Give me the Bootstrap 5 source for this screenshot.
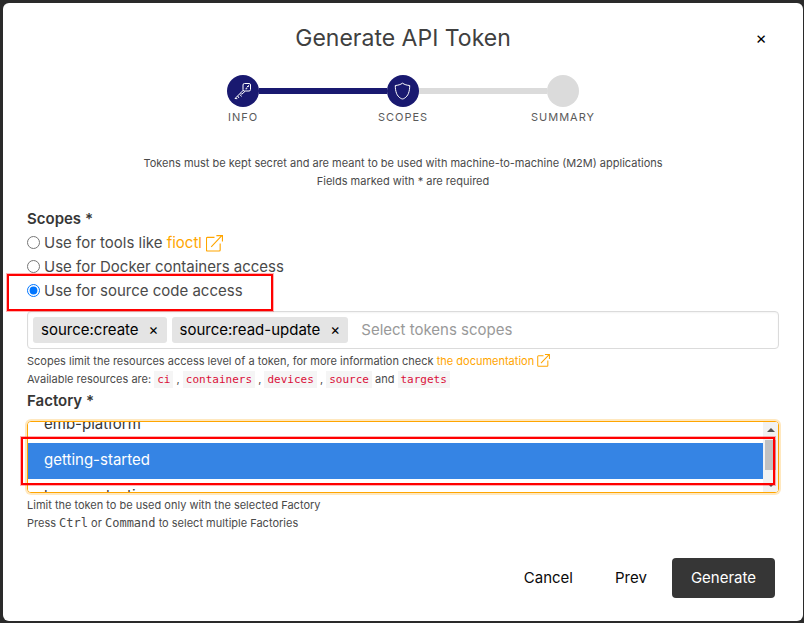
<!DOCTYPE html>
<html lang="en">
<head>
<meta charset="utf-8">
<meta name="viewport" content="width=device-width, initial-scale=1">
<title>Generate API Token</title>
<link href="https://cdn.jsdelivr.net/npm/bootstrap@5.3.0/dist/css/bootstrap.min.css" rel="stylesheet">
<style>
body { background: #2a2a2a; color: #4a4a4a; font-family: Inter, "Open Sans", sans-serif; font-size: 15px; line-height: 24px; }
.token-dialog { margin: 3px 1px 1px 3px; padding: 17px 24px 23px; border-radius: 6px; background: #fff; }
.dialog-title { font-size: 23px; line-height: 36px; color: #404040; font-weight: 400; }
.close-btn { right: 6px; top: 0; width: 24px; line-height: 36px; font-size: 17px; color: #000; }
.steps { width: 352px; max-width: 100%; margin: 19px auto 27px; }
.step { width: 32px; font-size: 11px; line-height: 20px; letter-spacing: 1px; color: #5a5a5a; }
.step-dot { width: 32px; height: 32px; background: #dbdbdb; }
.step-done .step-dot, .step-line-done { background: #191970; }
.step-line { height: 6px; margin-top: 13px; background: #dbdbdb; }
.step-line-done { background: #191970; }
.fine { font-size: 11px; line-height: 18px; color: #4a4a4a; }
.field-help { padding-top: 3px; }
.field-title { font-size: 15px; line-height: 24px; font-weight: 600; color: #363636; }
.accent, .accent:hover { color: #ffa500; text-decoration: none; }
.link-mark-sm { vertical-align: -2px; }
.token-form { margin-top: 17px; }
.scope-option { gap: 4px; }
.scope-option input { width: 13px; height: 13px; margin: 0 0 2px; }
.scope-box { min-height: 38px; padding: 5px; gap: 5px; border: 1px solid #dbdbdb; border-radius: 4px; box-shadow: inset 0 1px 2px rgba(10,10,10,.05); }
.scope-tag { height: 26px; padding: 0 8px; gap: 10px; background: #e4e4e4; color: #000; border-radius: 3px; }
.tag-remove { font-size: 15px; line-height: 24px; color: #000; }
.scope-input { min-width: 0; outline: 0; margin-left: 8px; color: #363636; }
.scope-input::placeholder { color: #999; opacity: 1; }
.resource { font-family: "DejaVu Sans Mono", monospace; font-size: 11px; color: #da1039; background: #f5f5f5; padding: 2px 3px; }
kbd.plain-key { font-family: "DejaVu Sans Mono", monospace; font-size: 12px; color: #4a4a4a; background: none; padding: 0; }
.factory-select { height: 72px; border: 1px solid #ffa500; border-radius: 4px; box-shadow: 0 0 0 2px rgba(255,165,0,.25); outline: 0; color: #363636; background: #fff; overflow-y: scroll; padding: 0; display: block; scrollbar-width: none; }
.factory-select option { height: 36px; padding: 7px 16px 5px; line-height: 24px; }
.factory-select option:checked { background: linear-gradient(#3584e4, #3584e4); color: #fff; -webkit-text-fill-color: #fff; }
.scroll-rail { right: 1px; top: 1px; bottom: 1px; width: 15px; padding: 6px 0 5px; background: #f1f1f1; border-radius: 0 3px 3px 0; pointer-events: none; }
.scroll-thumb { width: 11px; height: 30px; background: #c1c1c1; }
.highlight { border: 2px solid #f00; box-shadow: 0 0 0 1px rgba(255,0,0,.3); pointer-events: none; z-index: 2; }
.highlight-scope { left: -20px; top: -5px; width: 266px; height: 37px; }
.highlight-factory { left: -6px; right: 4px; top: 16px; height: 48px; }
.actions { margin-top: 26px; }
.action-btn, .action-btn:hover { font-size: 15px; line-height: 24px; padding: 7px 16px; border: 1px solid transparent; border-radius: 4px; color: #0a0a0a; }
.action-main, .action-main:hover { background: #363636; color: #fff; padding: 7px 18px; }
</style>
</head>
<body>
<main class="token-dialog">
  <header class="position-relative text-center">
    <h1 class="dialog-title mb-0">Generate API Token</h1>
    <button type="button" class="close-btn position-absolute border-0 bg-transparent p-0" aria-label="Close">×</button>
  </header>

  <div class="steps d-flex">
    <div class="step step-done d-flex flex-column align-items-center flex-shrink-0">
      <div class="step-dot rounded-circle d-flex align-items-center justify-content-center">
        <svg width="18" height="18" viewBox="0 0 18 18" fill="none" stroke="#fff" stroke-width="1" aria-hidden="true"><rect x="9" y="1.500" width="7.500" height="7.500" rx="1.500"/><path d="M9.500 8 1 16.500M11 9.300 7.800 12.200M7.800 12.200l-1.300-1M6 12.500l1.500 2M3.700 14l1.300 2M1 16.500l2.300.2M11.500 6.800h1.300V5.500M13 4.500h1.500V3.200"/></svg>
      </div>
      <span>INFO</span>
    </div>
    <div class="step-line step-line-done flex-grow-1"></div>
    <div class="step step-done d-flex flex-column align-items-center flex-shrink-0">
      <div class="step-dot rounded-circle d-flex align-items-center justify-content-center">
        <svg width="18" height="18" viewBox="0 0 18 18" fill="none" stroke="#fff" stroke-width="1" stroke-linejoin="round" aria-hidden="true"><path d="M8.500 1.200C6.500 2.600 4 3.300 1.300 3.500c0 6 1.500 10.500 5.200 12.700 1.500 1 2.500 1 4 0 3.700-2.200 5.200-6.700 5.200-12.700C13 3.300 10.500 2.600 8.500 1.200z"/></svg>
      </div>
      <span>SCOPES</span>
    </div>
    <div class="step-line flex-grow-1"></div>
    <div class="step d-flex flex-column align-items-center flex-shrink-0">
      <div class="step-dot rounded-circle"></div>
      <span>SUMMARY</span>
    </div>
  </div>

  <p class="fine text-center mb-0">Tokens must be kept secret and are meant to be used with machine-to-machine (M2M) applications<br>Fields marked with * are required</p>

  <form class="token-form">
    <fieldset>
      <legend class="field-title mb-0">Scopes *</legend>
      <div class="scope-option d-flex align-items-center">
        <input type="radio" name="use" id="use-tools">
        <label for="use-tools">Use for tools like <a class="accent d-inline-flex align-items-center" href="#">fioctl<svg class="ms-1" width="17" height="17" viewBox="0 0 18 18" fill="none" stroke="currentColor" stroke-width="1.200" aria-hidden="true"><path d="M9 2.500H1.500a1 1 0 0 0-1 1V16a1 1 0 0 0 1 1H14a1 1 0 0 0 1-1V9M5.500 12.500 16.500 1M11 .6h6.400V7"/></svg></a></label>
      </div>
      <div class="scope-option d-flex align-items-center">
        <input type="radio" name="use" id="use-docker">
        <label for="use-docker">Use for Docker containers access</label>
      </div>
      <div class="scope-option d-flex align-items-center position-relative">
        <input type="radio" name="use" id="use-source" checked>
        <label for="use-source">Use for source code access</label>
        <span class="highlight highlight-scope position-absolute"></span>
      </div>
    </fieldset>

    <div class="scope-box d-flex align-items-center mt-2">
      <span class="scope-tag d-flex align-items-center">source:create <button type="button" class="tag-remove border-0 bg-transparent p-0" aria-label="Remove source:create">×</button></span>
      <span class="scope-tag d-flex align-items-center">source:read-update <button type="button" class="tag-remove border-0 bg-transparent p-0" aria-label="Remove source:read-update">×</button></span>
      <input type="text" class="scope-input flex-grow-1 border-0 bg-transparent p-0" placeholder="Select tokens scopes" aria-label="Select tokens scopes">
    </div>
    <div class="fine field-help">Scopes limit the resources access level of a token, for more information check <a class="accent" href="#">the documentation <svg class="link-mark-sm" width="13" height="13" viewBox="0 0 18 18" fill="none" stroke="currentColor" stroke-width="1.400" aria-hidden="true"><path d="M9 2.500H2a1 1 0 0 0-1 1V16a1 1 0 0 0 1 1H14a1 1 0 0 0 1-1V9M5.500 12.500 16.500 1.200M11 .8h6.200V7"/></svg></a></div>
    <div class="fine">Available resources are: <code class="resource">ci</code> , <code class="resource">containers</code> , <code class="resource">devices</code> , <code class="resource">source</code> and <code class="resource">targets</code></div>

    <label class="field-title d-block mb-2" for="factory">Factory *</label>
    <div class="position-relative">
      <select class="factory-select w-100" id="factory" multiple>
        <option>emb-platform</option>
        <option selected>getting-started</option>
        <option>lmp-production</option>
      </select>
      <span class="scroll-rail position-absolute d-flex flex-column align-items-center justify-content-between" aria-hidden="true">
        <svg width="8" height="4" viewBox="0 0 8 4"><path d="M0 4 4 0l4 4z" fill="#505050"/></svg>
        <span class="scroll-thumb mb-auto mt-2"></span>
        <svg width="8" height="4" viewBox="0 0 8 4"><path d="M0 0l4 4 4-4z" fill="#505050"/></svg>
      </span>
      <span class="highlight highlight-factory position-absolute"></span>
    </div>
    <div class="fine field-help">Limit the token to be used only with the selected Factory</div>
    <div class="fine">Press <kbd class="plain-key">Ctrl</kbd> or <kbd class="plain-key">Command</kbd> to select multiple Factories</div>

    <div class="actions d-flex justify-content-end gap-2 pe-1">
      <button type="button" class="btn action-btn">Cancel</button>
      <button type="button" class="btn action-btn">Prev</button>
      <button type="submit" class="btn action-btn action-main">Generate</button>
    </div>
  </form>
</main>
<script src="https://cdn.jsdelivr.net/npm/bootstrap@5.3.0/dist/js/bootstrap.bundle.min.js"></script>
<script>
document.getElementById("factory").scrollTop = 15;
</script>
</body>
</html>
